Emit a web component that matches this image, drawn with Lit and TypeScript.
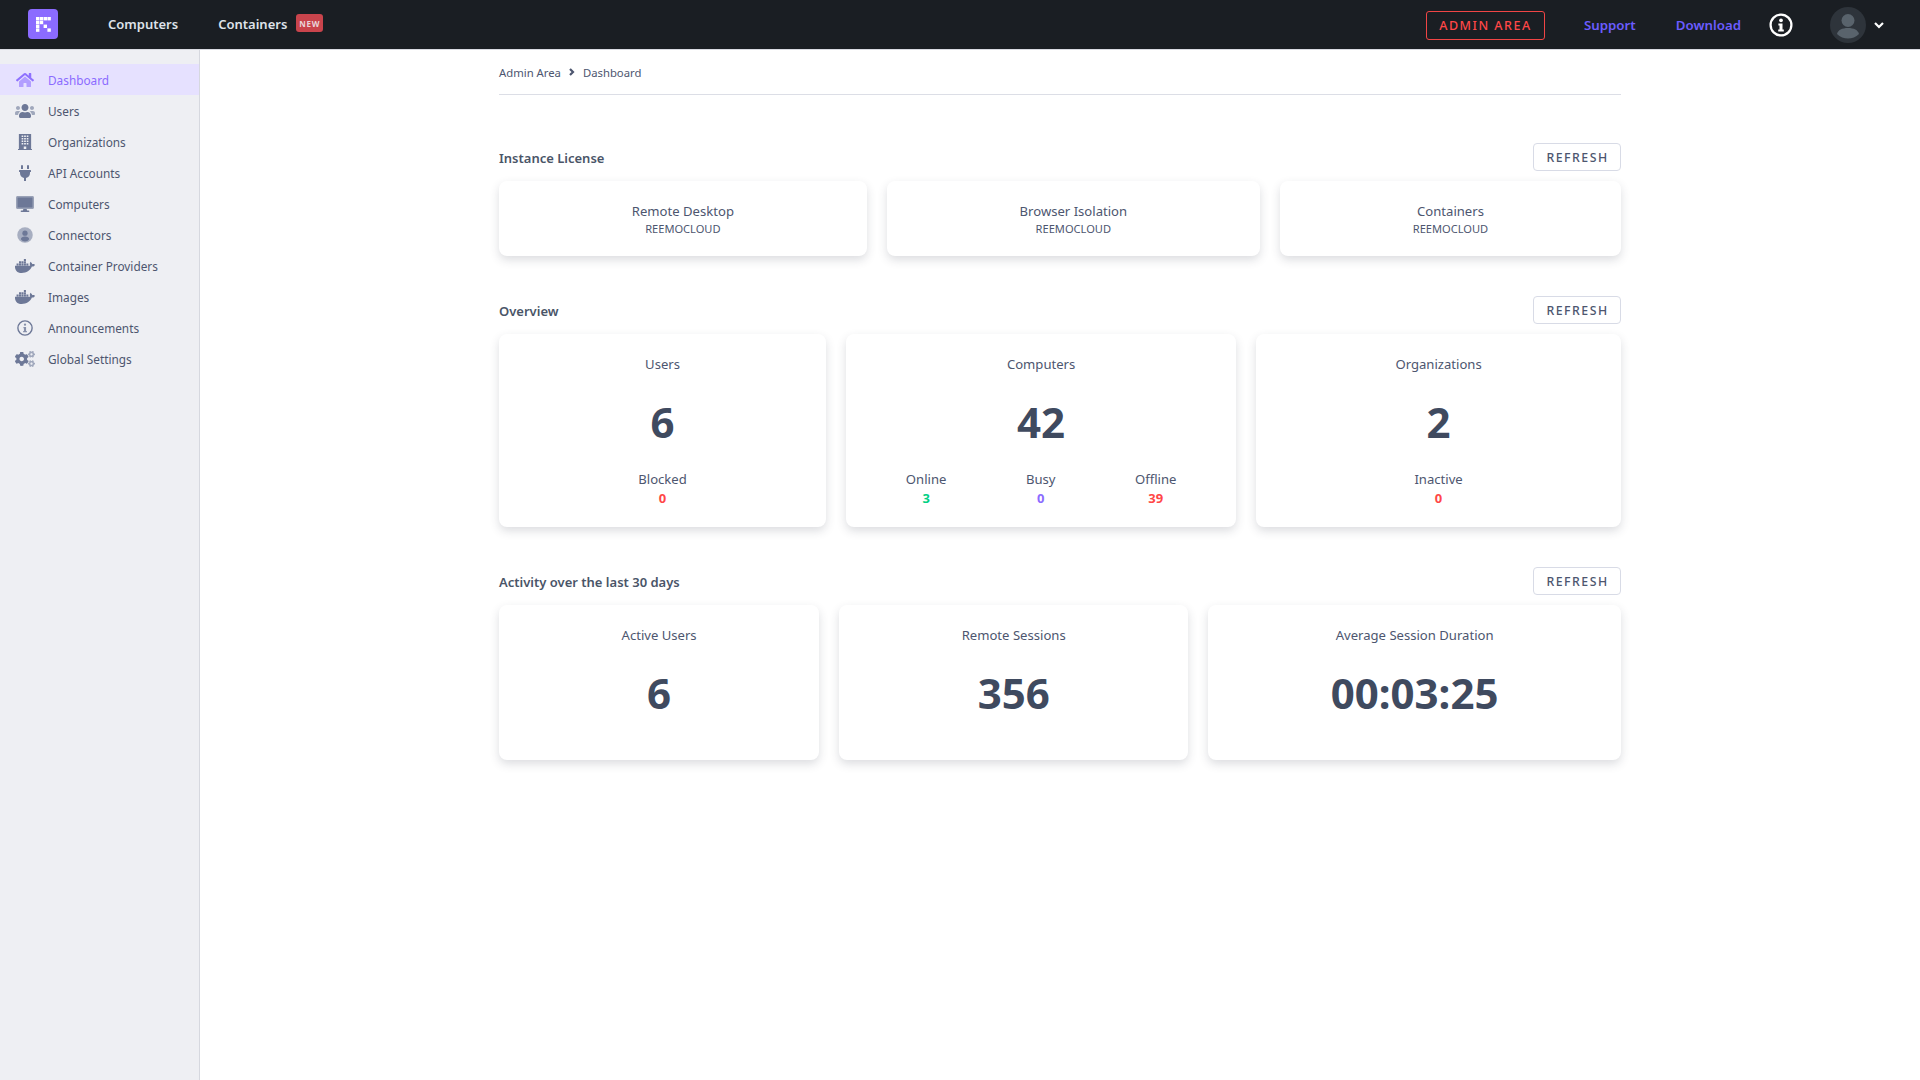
import { LitElement, html, css, svg } from "lit";
import { customElement } from "lit/decorators.js";

const ICONS: Record<string, any> = {
  home: svg`<svg viewBox="0 0 576 512"><path opacity=".6" d="M280.37 148.26L96 300.11V464a16 16 0 0 0 16 16l112.06-.29a16 16 0 0 0 15.92-16V368a16 16 0 0 1 16-16h64a16 16 0 0 1 16 16v95.64a16 16 0 0 0 16 16.05L464 480a16 16 0 0 0 16-16V300L295.67 148.26a12.19 12.19 0 0 0-15.3 0z"/><path d="M571.6 251.47L488 182.56V44.05a12 12 0 0 0-12-12h-56a12 12 0 0 0-12 12v72.61L318.47 43a48 48 0 0 0-61 0L4.34 251.47a12 12 0 0 0-1.6 16.9l25.5 31A12 12 0 0 0 45.15 301l235.22-193.74a12.19 12.19 0 0 1 15.3 0L530.9 301a12 12 0 0 0 16.9-1.6l25.5-31a12 12 0 0 0-1.7-16.93z"/></svg>`,
  users: svg`<svg viewBox="0 0 640 512"><path opacity=".6" d="M96 224c35.3 0 64-28.7 64-64s-28.7-64-64-64-64 28.7-64 64 28.7 64 64 64zm448 0c35.3 0 64-28.7 64-64s-28.7-64-64-64-64 28.7-64 64 28.7 64 64 64zm32 32h-64c-17.6 0-33.5 7.1-45.1 18.6 40.3 22.1 68.9 62 75.1 109.4h66c17.7 0 32-14.3 32-32v-32c0-35.3-28.7-64-64-64zM173.100 274.600C161.500 263.100 145.600 256 128 256H64c-35.300 0-64 28.700-64 64v32c0 17.700 14.300 32 32 32h65.900c6.300-47.400 34.900-87.300 75.200-109.400z"/><path d="M320 256c61.900 0 112-50.100 112-112S381.900 32 320 32 208 82.100 208 144s50.100 112 112 112zm76.800 32h-8.300c-20.800 10-43.900 16-68.500 16s-47.600-6-68.500-16h-8.300C179.600 288 128 339.600 128 403.200V432c0 26.500 21.500 48 48 48h288c26.500 0 48-21.500 48-48v-28.800c0-63.600-51.600-115.200-115.200-115.200z"/></svg>`,
  building: svg`<svg viewBox="0 0 448 512"><path fill-rule="evenodd" d="M28 0h392v496H28zM116 44v52h52V44zm80 0v52h56V44zm84 0v52h52V44zM116 124v52h52v-52zm80 0v52h56v-52zm84 0v52h52v-52zM116 204v52h52v-52zm80 0v52h56v-52zm84 0v52h52v-52zM116 284v52h52v-52zm80 0v52h56v-52zm84 0v52h52v-52zM184 400v96h80v-96z"/><path d="M0 480h448v32H0z"/></svg>`,
  plug: svg`<svg viewBox="0 0 384 512"><path d="M320,32a32,32,0,0,0-64,0v96h64Zm48,128H16A16,16,0,0,0,0,176v32a16,16,0,0,0,16,16H32v32A160.070,160.070,0,0,0,160,412.800V512h64V412.800A160.070,160.070,0,0,0,352,256V224h16a16,16,0,0,0,16-16V176A16,16,0,0,0,368,160ZM128,32a32,32,0,0,0-64,0v96h64Z"/></svg>`,
  desktop: svg`<svg viewBox="0 0 576 512"><path opacity=".65" d="M528 0H48C21.500 0 0 21.500 0 48v320c0 26.500 21.500 48 48 48h480c26.500 0 48-21.500 48-48V48c0-26.500-21.500-48-48-48z"/><path d="M48 48h480v320H48z"/><path d="M236 416h104l16 48h48a24 24 0 0 1 0 48H172a24 24 0 0 1 0-48h48z"/></svg>`,
  circleUser: svg`<svg viewBox="0 0 512 512"><circle opacity=".55" cx="256" cy="256" r="248"/><circle cx="256" cy="196" r="84"/><path d="M256 304c-74 0-132 34-132 84 34 44 80 72 132 72s98-28 132-72c0-50-58-84-132-84z"/></svg>`,
  docker: svg`<svg viewBox="0 0 640 512"><path d="M349.900 236.300h-66.100v-59.400h66.100v59.400zm0-204.300h-66.100v60.700h66.100V32zm78.200 144.800H362v59.400h66.100v-59.400zm-156.300-72.100h-66.100v60.100h66.100v-60.100zm78.100 0h-66.100v60.100h66.100v-60.100zm276.800 100c-14.400-9.700-47.600-13.200-73.100-8.400-3.300-24-16.700-44.900-41.100-63.700l-14-9.300-9.300 14c-18.400 27.800-23.400 73.600-3.700 103.800-8.700 4.700-25.800 11.100-48.400 10.700H2.400c-8.700 50.800 5.800 116.800 44 162.100 37.100 43.900 92.700 66.200 165.400 66.200 157.400 0 273.900-72.500 328.400-204.200 21.400.4 67.600.1 91.300-45.200 1.500-2.500 6.600-13.200 8.500-17.100l-13.300-8.900zm-511.100-27.900h-66v59.400h66.100v-59.400zm78.100 0h-66.100v59.400h66.100v-59.400zm78.100 0h-66.100v59.400h66.100v-59.400zm-78.100-72.100h-66.100v60.100h66.100v-60.100z"/></svg>`,
  infoThin: svg`<svg viewBox="0 0 512 512"><circle cx="256" cy="256" r="228" fill="none" stroke="currentColor" stroke-width="44"/><circle opacity=".8" cx="256" cy="150" r="36"/><path opacity=".8" d="M206 220h84v128h26v40H196v-40h26v-88h-16z"/></svg>`,
  info: svg`<svg viewBox="0 0 512 512"><circle cx="256" cy="256" r="222" fill="none" stroke="currentColor" stroke-width="48"/><circle cx="256" cy="156" r="40"/><path d="M200 222h88v130h28v44H196v-44h28v-86h-24z"/></svg>`,
  cogs: svg`<svg viewBox="0 0 640 512"><path opacity=".6" d="M512.100 191l-8.200 14.300c-3 5.300-9.400 7.500-15.100 5.400-11.800-4.400-22.600-10.700-32.100-18.600-4.600-3.800-5.800-10.500-2.800-15.700l8.200-14.300c-6.900-8-12.300-17.300-15.900-27.400h-16.500c-6 0-11.200-4.300-12.200-10.300-2-12-2.100-24.600 0-37.100 1-6 6.200-10.400 12.200-10.400h16.500c3.600-10.100 9-19.400 15.900-27.400l-8.200-14.300c-3-5.200-1.900-11.900 2.800-15.700 9.500-7.900 20.400-14.200 32.100-18.600 5.700-2.100 12.100.1 15.100 5.400l8.200 14.300c10.500-1.900 21.200-1.900 31.700 0L552 6.300c3-5.300 9.400-7.500 15.100-5.400 11.800 4.400 22.600 10.700 32.100 18.600 4.600 3.800 5.800 10.500 2.800 15.700l-8.200 14.300c6.900 8 12.300 17.300 15.900 27.400h16.500c6 0 11.200 4.300 12.200 10.300 2 12 2.100 24.600 0 37.100-1 6-6.200 10.400-12.200 10.400h-16.500c-3.600 10.100-9 19.400-15.900 27.400l8.200 14.300c3 5.200 1.900 11.900-2.800 15.700-9.500 7.900-20.400 14.200-32.100 18.600-5.700 2.100-12.100-.1-15.100-5.400l-8.200-14.300c-10.400 1.900-21.200 1.900-31.700 0zm-10.500-58.800c38.500 29.600 82.400-14.300 52.800-52.800-38.500-29.700-82.400 14.300-52.800 52.800zM512.100 489.900l-8.200 14.300c-3 5.300-9.400 7.500-15.100 5.400-11.800-4.400-22.600-10.700-32.100-18.600-4.600-3.800-5.800-10.500-2.800-15.700l8.200-14.300c-6.900-8-12.300-17.300-15.900-27.400h-16.500c-6 0-11.200-4.300-12.200-10.300-2-12-2.100-24.600 0-37.100 1-6 6.200-10.400 12.200-10.400h16.500c3.600-10.100 9-19.400 15.900-27.400l-8.200-14.300c-3-5.200-1.900-11.900 2.800-15.700 9.500-7.900 20.400-14.200 32.100-18.600 5.700-2.100 12.100.1 15.100 5.400l8.200 14.300c10.500-1.900 21.200-1.900 31.700 0l8.200-14.300c3-5.300 9.400-7.500 15.100-5.400 11.800 4.400 22.600 10.700 32.100 18.600 4.600 3.800 5.800 10.500 2.800 15.700l-8.200 14.300c6.900 8 12.300 17.300 15.900 27.400h16.500c6 0 11.200 4.300 12.200 10.300 2 12 2.100 24.600 0 37.100-1 6-6.200 10.400-12.200 10.400h-16.500c-3.600 10.100-9 19.400-15.900 27.400l8.200 14.300c3 5.200 1.900 11.900-2.800 15.700-9.500 7.900-20.400 14.200-32.100 18.600-5.700 2.100-12.100-.1-15.100-5.400l-8.200-14.300c-10.400 1.900-21.200 1.900-31.700 0zM501.600 431c38.500 29.600 82.400-14.300 52.800-52.800-38.500-29.600-82.400 14.300-52.800 52.800z"/><path d="M386.300 286.100l33.700 16.800c10.100 5.800 14.500 18.100 10.500 29.100-8.900 24.200-26.400 46.400-42.600 65.800-7.400 8.900-20.200 11.100-30.300 5.300l-29.100-16.800c-16 13.700-34.600 24.600-54.900 31.700v33.600c0 11.600-8.300 21.600-19.700 23.600-24.600 4.200-50.400 4.400-75.900 0-11.500-2-20-11.900-20-23.600V418c-20.300-7.200-38.900-18-54.900-31.700L74 403c-10 5.800-22.900 3.600-30.300-5.300-16.200-19.400-33.300-41.600-42.200-65.700-4-10.900.4-23.200 10.500-29.100l33.300-16.800c-3.900-20.900-3.900-42.400 0-63.400L12 205.800c-10.100-5.800-14.600-18.100-10.500-29 8.900-24.200 26-46.400 42.200-65.800 7.400-8.900 20.200-11.100 30.300-5.300l29.100 16.800c16-13.700 34.600-24.600 54.900-31.700V57.100c0-11.500 8.200-21.500 19.600-23.500 24.600-4.200 50.500-4.400 76-.1 11.500 2 20 11.900 20 23.600v33.600c20.300 7.200 38.900 18 54.900 31.700l29.100-16.800c10-5.800 22.900-3.600 30.300 5.300 16.200 19.400 33.200 41.600 42.100 65.800 4 10.900.1 23.200-10 29.100l-33.700 16.800c3.900 21 3.900 42.500 0 63.500zm-117.600 21.100c59.200-77-28.700-164.900-105.700-105.700-59.200 77 28.700 164.900 105.700 105.700z"/></svg>`,
};

const NAV = [
  ["home", "Dashboard"],
  ["users", "Users"],
  ["building", "Organizations"],
  ["plug", "API Accounts"],
  ["desktop", "Computers"],
  ["circleUser", "Connectors"],
  ["docker", "Container Providers"],
  ["docker", "Images"],
  ["infoThin", "Announcements"],
  ["cogs", "Global Settings"],
];

const LOGO_CELLS = [
  [0, 0], [1, 0], [2, 0], [3, 0],
  [0, 1], [1, 1],
  [0, 2], [2, 2],
  [0, 3], [3, 3],
];

type Stat = { label: string; value: string; tone: string };
type Metric = { title: string; value: string; stats?: Stat[] };

const LICENSES = ["Remote Desktop", "Browser Isolation", "Containers"];
const OVERVIEW: Metric[] = [
  { title: "Users", value: "6", stats: [{ label: "Blocked", value: "0", tone: "red" }] },
  {
    title: "Computers",
    value: "42",
    stats: [
      { label: "Online", value: "3", tone: "green" },
      { label: "Busy", value: "0", tone: "purple" },
      { label: "Offline", value: "39", tone: "red" },
    ],
  },
  { title: "Organizations", value: "2", stats: [{ label: "Inactive", value: "0", tone: "red" }] },
];
const ACTIVITY: Metric[] = [
  { title: "Active Users", value: "6" },
  { title: "Remote Sessions", value: "356" },
  { title: "Average Session Duration", value: "00:03:25" },
];

@customElement("app-root")
export class AppRoot extends LitElement {
  static styles = css`
    :host {
      display: flex;
      flex-direction: column;
      height: 1080px;
      font-family: "Noto Sans", sans-serif;
      color: #4a5568;
      background: #fff;
    }
    .top {
      flex: none;
      height: 49px;
      border-bottom: 1px solid #d9dbe2;
      background: #1a1e23;
      display: flex;
      align-items: center;
      padding-left: 28px;
      padding-right: 35px;
    }
    .logo {
      width: 30px;
      height: 30px;
      border-radius: 4px;
      background: #8b6bff;
      margin-right: 50px;
      margin-top: -1px;
      display: block;
    }
    .tlink {
      font-size: 13px;
      font-weight: 600;
      color: #dfe3ea;
      margin-right: 40px;
      margin-top: -1px;
    }
    .tlink.c {
      margin-right: 9px;
    }
    .badge {
      width: 27px;
      height: 18px;
      border-radius: 3px;
      background: #c9444c;
      color: #e9d5da;
      font-size: 8px;
      font-weight: 700;
      letter-spacing: 0.8px;
      display: flex;
      align-items: center;
      justify-content: center;
      margin-top: -3px;
    }
    .spacer {
      flex: 1;
    }
    .admin {
      box-sizing: border-box;
      width: 119px;
      height: 29px;
      border: 1px solid #f04545;
      border-radius: 3px;
      color: #ff4747;
      font-size: 12.5px;
      font-weight: 500;
      letter-spacing: 1.5px;
      display: flex;
      align-items: center;
      justify-content: center;
      margin-right: 39px;
      margin-top: 1px;
    }
    .plink {
      font-size: 13.3px;
      font-weight: 600;
      color: #6b5cff;
      margin-right: 40px;
      margin-top: 1px;
    }
    .plink.last {
      margin-right: 27px;
    }
    .tinfo {
      width: 24px;
      height: 24px;
      color: #fff;
      fill: #fff;
      margin-right: 37px;
      display: block;
      margin-left: 1px;
    }
    .tinfo svg {
      display: block;
    }
    .avatar {
      width: 36px;
      height: 36px;
      display: block;
      margin-right: 7px;
    }
    .chev {
      width: 12px;
      height: 12px;
      display: block;
    }
    .body {
      flex: 1;
      display: flex;
      min-height: 0;
    }
    .side {
      flex: none;
      box-sizing: border-box;
      width: 200px;
      background: #eeeff3;
      border-right: 1px solid #d6d8df;
      padding-top: 14px;
    }
    .item {
      height: 31px;
      display: flex;
      align-items: center;
      padding-left: 15px;
      font-size: 11.8px;
      color: #4d566f;
    }
    .item .ic {
      width: 20px;
      height: 20px;
      margin-right: 13px;
      fill: #6d7897;
      color: #6d7897;
      display: flex;
      align-items: center;
      justify-content: center;
    }
    .item .ic svg {
      display: block;
      height: 16px;
      width: auto;
    }
    .item .lbl {
      padding-top: 1px;
    }
    .item.on {
      background: #e6e1ff;
      color: #8b6bff;
    }
    .item.on .ic {
      fill: #8f72ff;
      color: #8f72ff;
    }
    .main {
      flex: 1;
      min-width: 0;
      display: flex;
      justify-content: center;
    }
    .wrap {
      width: 1122px;
    }
    .crumb {
      box-sizing: border-box;
      height: 45px;
      border-bottom: 1px solid #dcdee6;
      display: flex;
      align-items: center;
      font-size: 11.3px;
      color: #4d566f;
      margin-bottom: 48px;
    }
    .crumb svg {
      width: 8px;
      height: 8px;
      margin: 0 7px 0 7px;
      fill: none;
      stroke: #4d566f;
      stroke-width: 2.2;
      display: block;
    }
    .head {
      height: 28px;
      display: flex;
      align-items: center;
      justify-content: space-between;
      margin-bottom: 10px;
    }
    .head h2 {
      margin: 0;
      padding-top: 1px;
      font-size: 13px;
      font-weight: 600;
      color: #4a5568;
    }
    .refresh {
      box-sizing: border-box;
      width: 88px;
      height: 28px;
      border: 1px solid #d8dbe6;
      border-radius: 4px;
      padding-left: 1px;
      font-size: 12.3px;
      font-weight: 500;
      letter-spacing: 1.5px;
      color: #4d566f;
      display: flex;
      align-items: center;
      justify-content: center;
    }
    .row {
      display: flex;
      gap: 20px;
      margin-bottom: 40px;
    }
    .card {
      flex: 1 1 auto;
      box-sizing: border-box;
      background: #fff;
      border-radius: 8px;
      padding: 20px;
      text-align: center;
      box-shadow: 0 4px 10px rgba(45, 55, 72, 0.17);
    }
    .t {
      font-size: 13.1px;
      line-height: 20px;
      color: #4d566f;
    }
    .s {
      font-size: 11.1px;
      line-height: 15px;
      color: #4d566f;
    }
    .n {
      font-size: 42px;
      line-height: 60px;
      font-weight: 700;
      color: #3f4a5f;
      margin: 18px 0 17px;
    }
    .stats {
      display: flex;
      justify-content: space-around;
    }
    .l {
      font-size: 13.1px;
      line-height: 20px;
      color: #4d566f;
    }
    .v {
      font-size: 13px;
      line-height: 18px;
      font-weight: 700;
    }
    .red {
      color: #ff4747;
    }
    .green {
      color: #00d084;
    }
    .purple {
      color: #8b6bff;
    }
  `;

  private head(title: string) {
    return html`<div class="head"><h2>${title}</h2><div class="refresh">REFRESH</div></div>`;
  }

  private metric(m: Metric) {
    return html`<div class="card">
      <div class="t">${m.title}</div>
      <div class="n">${m.value}</div>
      ${m.stats
        ? html`<div class="stats">
            ${m.stats.map(
              (s) => html`<div><div class="l">${s.label}</div><div class="v ${s.tone}">${s.value}</div></div>`
            )}
          </div>`
        : null}
    </div>`;
  }

  render() {
    return html`
      <div class="top">
        <svg class="logo" viewBox="0 0 30 30">
          ${LOGO_CELLS.map(
            ([x, y]) => svg`<rect x=${8 + x * 3.8} y=${8 + y * 3.8} width="3.4" height="3.4" fill="#fff"></rect>`
          )}
        </svg>
        <span class="tlink">Computers</span>
        <span class="tlink c">Containers</span>
        <span class="badge">NEW</span>
        <span class="spacer"></span>
        <span class="admin">ADMIN AREA</span>
        <span class="plink">Support</span>
        <span class="plink last">Download</span>
        <span class="tinfo">${ICONS.info}</span>
        <svg class="avatar" viewBox="0 0 36 36">
          <circle cx="18" cy="18" r="18" fill="#2e343b"></circle>
          <circle cx="18" cy="13.500" r="6.500" fill="#59636c"></circle>
          <path d="M7 27c1-4 5-6 11-6s10 2 11 6c-3 3-7 4.500-11 4.500S10 30 7 27z" fill="#59636c"></path>
        </svg>
        <svg class="chev" viewBox="0 0 12 12">
          <path d="M2 4l4 4 4-4" fill="none" stroke="#fff" stroke-width="2.200"></path>
        </svg>
      </div>
      <div class="body">
        <nav class="side">
          ${NAV.map(
            ([icon, label], i) => html`<div class="item ${i === 0 ? "on" : ""}">
              <span class="ic">${ICONS[icon]}</span><span class="lbl">${label}</span>
            </div>`
          )}
        </nav>
        <main class="main">
          <div class="wrap">
            <div class="crumb">
              Admin Area
              <svg viewBox="0 0 8 8"><path d="M2 1l3 3-3 3"></path></svg>
              Dashboard
            </div>
            ${this.head("Instance License")}
            <div class="row">
              ${LICENSES.map(
                (l) => html`<div class="card"><div class="t">${l}</div><div class="s">REEMOCLOUD</div></div>`
              )}
            </div>
            ${this.head("Overview")}
            <div class="row">${OVERVIEW.map((m) => this.metric(m))}</div>
            ${this.head("Activity over the last 30 days")}
            <div class="row">${ACTIVITY.map((m) => this.metric(m))}</div>
          </div>
        </main>
      </div>
    `;
  }
}
